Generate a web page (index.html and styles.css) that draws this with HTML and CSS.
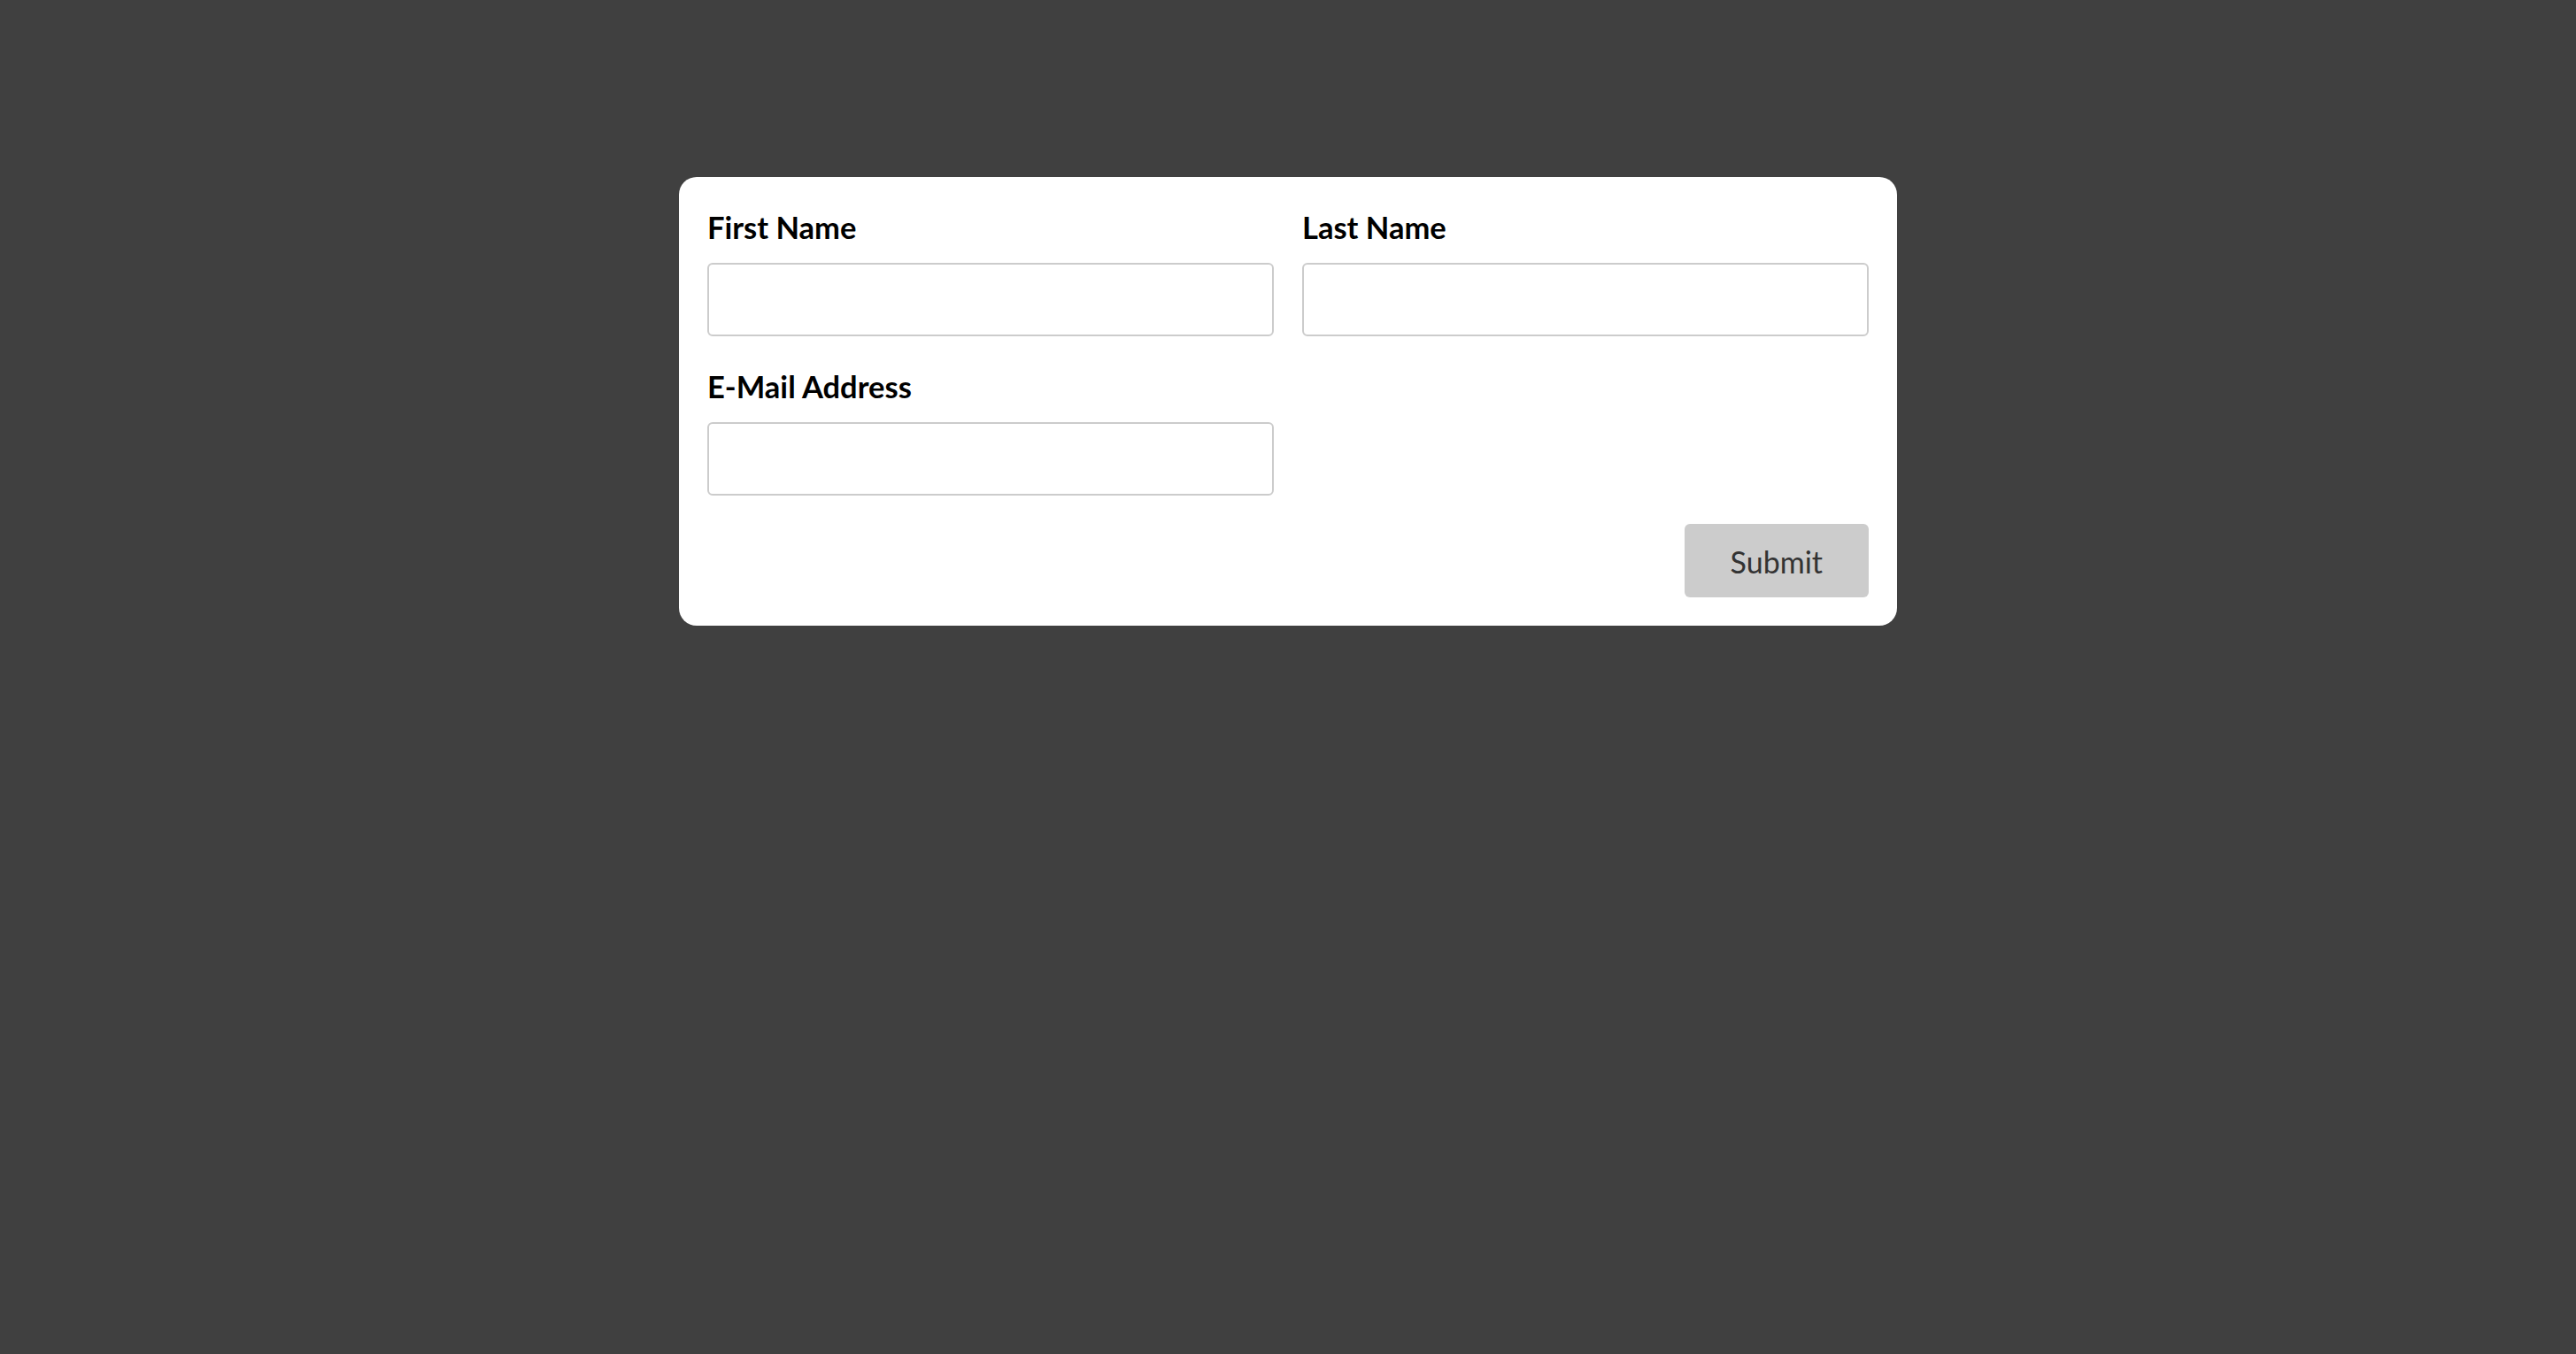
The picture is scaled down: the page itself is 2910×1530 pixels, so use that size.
FILE: index.html
```html
<!DOCTYPE html>
<html lang="en">
<head>
<meta charset="utf-8">
<title>Form</title>
<link rel="stylesheet" href="styles.css">
</head>
<body>
<main class="page">
  <form class="card">
    <div class="fields">
      <div class="field">
        <label class="label" for="first">First Name</label>
        <input class="input" id="first" type="text">
      </div>
      <div class="field">
        <label class="label" for="last">Last Name</label>
        <input class="input" id="last" type="text">
      </div>
      <div class="field">
        <label class="label" for="email">E-Mail Address</label>
        <input class="input" id="email" type="email">
      </div>
    </div>
    <div class="actions">
      <button class="submit" type="button">Submit</button>
    </div>
  </form>
</main>
</body>
</html>
```
FILE: styles.css
```css
html, body {
  margin: 0;
  padding: 0;
  background: #404040;
  font-family: Lato, "Liberation Sans", sans-serif;
}

.page {
  display: flex;
  justify-content: center;
  align-items: flex-start;
  padding-top: 200px;
  min-height: 1530px;
  box-sizing: border-box;
}

.card {
  width: 1376px;
  box-sizing: border-box;
  background: #ffffff;
  border-radius: 20px;
  padding: 32px;
  display: flex;
  flex-direction: column;
  gap: 32px;
}

.fields {
  display: grid;
  grid-template-columns: 1fr 1fr;
  column-gap: 32px;
  row-gap: 32px;
}

.field {
  display: flex;
  flex-direction: column;
}

.label {
  font-size: 34.5px;
  font-weight: 700;
  line-height: 50px;
  color: #000;
  margin-bottom: 15px;
}

.input {
  height: 83px;
  box-sizing: border-box;
  border: 2px solid #cccccc;
  border-radius: 6px;
  background: #fff;
  font-family: inherit;
  font-size: 34px;
  padding: 0 16px;
  outline: none;
}

.actions {
  display: flex;
  justify-content: flex-end;
}

.submit {
  height: 83px;
  padding: 2px 52px 0;
  border: none;
  border-radius: 6px;
  background: #cccccc;
  color: #333333;
  font-family: inherit;
  font-size: 34px;
  font-weight: 400;
  cursor: pointer;
}
```
